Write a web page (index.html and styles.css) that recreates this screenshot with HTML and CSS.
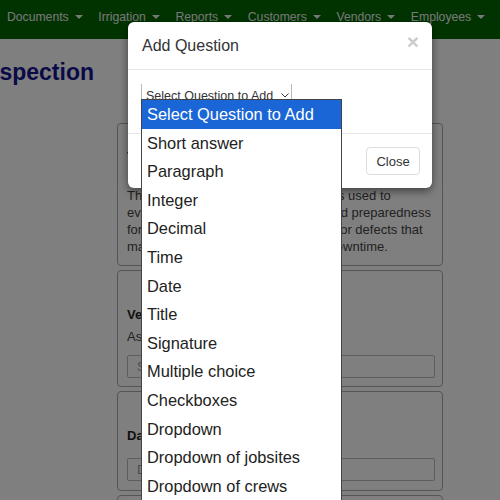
FILE: index.html
```html
<!DOCTYPE html>
<html lang="en">
<head>
<meta charset="utf-8">
<title>Inspection</title>
<link rel="stylesheet" href="styles.css">
</head>
<body>
<nav class="topnav">
  <span class="nav-item">Documents<span class="caret"></span></span>
  <span class="nav-item">Irrigation<span class="caret"></span></span>
  <span class="nav-item">Reports<span class="caret"></span></span>
  <span class="nav-item">Customers<span class="caret"></span></span>
  <span class="nav-item">Vendors<span class="caret"></span></span>
  <span class="nav-item">Employees<span class="caret"></span></span>
</nav>
<main class="page">
  <h1 class="page-title">Inspection</h1>
  <section class="cards">
    <div class="card card-intro">
      <div class="card-title">Truck Inspection</div>
      <p class="card-desc">This equipment inspection checklist is used to<br>evaluate the condition, operability, and preparedness<br>for use and helps identify any issues or defects that<br>may cause equipment failures and downtime.</p>
    </div>
    <div class="card card-q">
      <div class="q-title">Vehicle Number</div>
      <div class="q-help">Ask for the vehicle number</div>
      <div class="q-input">Short answer text</div>
    </div>
    <div class="card card-q card-date">
      <div class="q-title">Date</div>
      <div class="q-input">Date</div>
    </div>
    <div class="card card-q"></div>
  </section>
</main>
<div class="backdrop"></div>
<div class="modal">
  <div class="modal-header">
    <span class="modal-title">Add Question</span>
    <span class="modal-close">&times;</span>
  </div>
  <div class="modal-body">
    <div class="select-box">
      <span>Select Question to Add</span>
      <svg class="chev" width="8" height="5" viewBox="0 0 8 5"><path d="M0.5 0.5 L4 4 L7.5 0.5" fill="none" stroke="#333" stroke-width="1"/></svg>
    </div>
  </div>
  <div class="modal-footer">
    <span class="btn">Close</span>
  </div>
</div>
<ul class="select-popup">
  <li class="active">Select Question to Add</li>
  <li>Short answer</li>
  <li>Paragraph</li>
  <li>Integer</li>
  <li>Decimal</li>
  <li>Time</li>
  <li>Date</li>
  <li>Title</li>
  <li>Signature</li>
  <li>Multiple choice</li>
  <li>Checkboxes</li>
  <li>Dropdown</li>
  <li>Dropdown of jobsites</li>
  <li>Dropdown of crews</li>
</ul>
</body>
</html>
```

FILE: styles.css
```css
* { box-sizing: border-box; }
html, body { margin: 0; padding: 0; }
body {
  width: 500px;
  height: 500px;
  overflow: hidden;
  background: #ffffff;
  font-family: "Liberation Sans", Arial, sans-serif;
  position: relative;
}
.topnav {
  height: 39px;
  background: #006600;
  display: flex;
  align-items: center;
  gap: 15.7px;
  padding-left: 7px;
  padding-bottom: 5px;
  white-space: nowrap;
}
.nav-item {
  color: #f0f0f0;
  font-size: 12.2px;
  display: flex;
  align-items: center;
}
.caret {
  display: inline-block;
  width: 0;
  height: 0;
  margin-left: 6px;
  border-top: 4px solid #f0f0f0;
  border-left: 4px solid transparent;
  border-right: 4px solid transparent;
}
.page-title {
  margin: 19px 0 0 -21px;
  font-size: 23px;
  line-height: 28px;
  font-weight: bold;
  color: #141490;
}
.cards {
  margin: 37px 0 0 117px;
  width: 326px;
  display: flex;
  flex-direction: column;
  gap: 4px;
}
.card {
  border: 1px solid #aaaaaa;
  border-radius: 4px;
  padding: 0 7px 8px 9px;
  font-size: 13px;
  color: #444444;
}
.card-intro { padding-top: 24px; padding-bottom: 10px; }
.card-title { font-weight: bold; line-height: 17px; margin-bottom: 22px; }
.card-desc { margin: 0; line-height: 17px; white-space: nowrap; }
.card-q { padding-top: 35px; }
.q-title { font-weight: bold; line-height: 17px; color: #222; }
.q-help { line-height: 17px; margin-top: 5px; }
.q-input {
  margin-top: 10px;
  height: 23px;
  border: 1px solid #bbbbbb;
  border-radius: 2px;
  padding-left: 9px;
  line-height: 21px;
  color: #999999;
}
.card-date { padding-top: 35px; padding-bottom: 9px; }
.card-date .q-input { margin-top: 14px; }
.card:last-child { height: 40px; }

.backdrop {
  position: absolute;
  inset: 0;
  background: rgba(0, 0, 0, 0.5);
}
.modal {
  position: absolute;
  left: 128px;
  top: 22px;
  width: 304px;
  background: #ffffff;
  border-radius: 6px;
  box-shadow: 0 3px 9px rgba(0, 0, 0, 0.5);
  color: #333333;
}
.modal-header {
  height: 48px;
  border-bottom: 1px solid #e8e8e8;
  display: flex;
  align-items: center;
  justify-content: space-between;
  padding: 0 13px 0 14px;
}
.modal-title { font-size: 16px; }
.modal-close {
  font-size: 21px;
  font-weight: bold;
  color: #cccccc;
  line-height: 1;
  margin-top: -8px;
}
.modal-body {
  height: 63px;
  padding: 14px 13px 0;
}
.select-box {
  width: 151px;
  height: 22px;
  border-left: 1px solid #b8b8b8;
  border-right: 1px solid #b8b8b8;
  display: flex;
  align-items: center;
  justify-content: space-between;
  padding: 2px 2px 0 4px;
  font-size: 12.5px;
  color: #333;
}
.chev { margin-top: -2px; }
.modal-footer {
  height: 55px;
  border-top: 1px solid #e8e8e8;
  display: flex;
  align-items: center;
  justify-content: flex-end;
  padding-right: 12px;
}
.btn {
  width: 54px;
  height: 28px;
  border: 1px solid #dddddd;
  border-radius: 4px;
  font-size: 13px;
  display: flex;
  align-items: center;
  justify-content: center;
  color: #333;
}
.select-popup {
  position: absolute;
  left: 141px;
  top: 99px;
  width: 201px;
  margin: 0;
  padding: 0;
  list-style: none;
  background: #ffffff;
  border: 1px solid #444444;
  border-bottom: none;
  font-size: 16.4px;
  color: #222222;
}
.select-popup li {
  height: 28.6px;
  line-height: 28.6px;
  padding-left: 5px;
  white-space: nowrap;
}
.select-popup li.active {
  background: #1a66d6;
  color: #ffffff;
}
```
